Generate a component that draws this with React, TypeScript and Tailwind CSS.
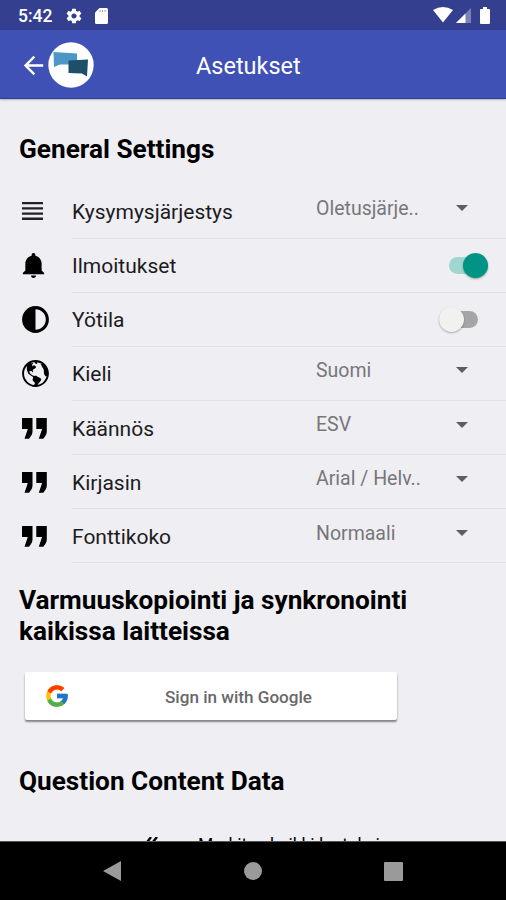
import { IoMdNotifications, IoMdContrast, IoMdGlobe, IoMdSettings } from "react-icons/io";
import { MdArrowBack } from "react-icons/md";
import { FcGoogle } from "react-icons/fc";
import type { ReactNode } from "react";

function StatusBar() {
  return (
    <div className="flex h-[30px] items-center bg-[#34408f] pl-[18px] pr-[16px] text-white">
      <span className="mt-[3px] w-[47px] text-[17.500px] font-medium leading-none">5:42</span>
      <IoMdSettings className="mt-[1px] size-[18px]" />
      <svg viewBox="0 0 13 16" className="ml-[12px] mt-[1px] h-[16px] w-[13px]" fill="currentColor">
        <path d="M4.5 0H11.500Q13 0 13 1.500V14.500Q13 16 11.500 16H1.500Q0 16 0 14.500V4.500Z" />
        <path d="M5 2V4M7.500 2V4M10 2V4" stroke="#34408f" strokeWidth=".8" opacity=".6" />
      </svg>
      <svg viewBox="0 0 20 16" className="ml-auto mr-[1px] h-[16px] w-[20px]" fill="currentColor">
        <path d="M0 3Q10-3 20 3L10 15.500Z" />
      </svg>
      <svg viewBox="0 0 15 15" className="ml-[2px] mt-[1px] h-[15px] w-[15px]" fill="currentColor">
        <path d="M0 15L15 0V15Z" opacity=".35" />
        <path d="M0 15L9.500 5.500V15Z" />
      </svg>
      <svg viewBox="0 0 10 17" className="ml-[9px] h-[17px] w-[10px]" fill="currentColor">
        <path d="M3 0H7V2H9Q10 2 10 3V16Q10 17 9 17H1Q0 17 0 16V3Q0 2 1 2H3Z" />
      </svg>
    </div>
  );
}

function Header() {
  return (
    <header className="relative z-10 flex h-[69px] items-center border-b border-[#2f3b9c] bg-[#3f51b5] text-white shadow-[0_1px_2px_rgba(0,0,0,0.25)]">
      <MdArrowBack className="ml-[19px] mt-[2px] size-[29px]" />
      <svg viewBox="0 0 46 46" className="mt-[1px] h-[46px] w-[46px]">
        <circle cx="23" cy="23" r="22.700" fill="#fff" />
        <path d="M5.500 10L29 11.500V22.500L12 22.500L6 25Z" fill="#4e96c6" />
        <path d="M20.500 18.500L40 17.500L39 34.500L34 31.500L20.500 31Z" fill="#1d4f68" />
      </svg>
      <h1 className="ml-[102px] mt-[5px] text-[23.500px] leading-none">Asetukset</h1>
    </header>
  );
}

function LinesIcon() {
  return (
    <svg viewBox="0 0 21 18" className="ml-[3px] h-[18px] w-[21px]" fill="#222">
      <path d="M0 0H21V2.300H0ZM0 5.200H21V7.500H0ZM0 10.400H21V12.700H0ZM0 15.600H21V17.900H0Z" />
    </svg>
  );
}

function QuoteIcon() {
  return (
    <svg viewBox="0 0 25 21" className="ml-[3px] h-[21px] w-[25px]" fill="#000">
      <path d="M0 0H10.500V13.500Q10.500 16 9 18L7 20.800H2.500L5.800 11H0Z" />
      <path d="M14.300 0H24.800V13.500Q24.800 16 23.300 18L21.300 20.800H16.800L20.100 11H14.300Z" />
    </svg>
  );
}

function DoubleCheckIcon() {
  return (
    <svg viewBox="0 0 28 18" className="h-[18px] w-[28px]" fill="none" stroke="#000" strokeWidth="2.400">
      <path d="M0 9L7 16L19 0M10 13L12 16L25 0" />
    </svg>
  );
}

function Select({ value }: { value: string }) {
  return (
    <div className="mb-[5px] flex w-[190px] items-center text-[#77777a]">
      <span className="w-[139.500px] text-[19.500px] leading-none">{value}</span>
      <svg viewBox="0 0 12 6" className="mb-[1px] h-[6px] w-[12px]" fill="#5d5d62">
        <path d="M0 0H12L6 6Z" />
      </svg>
    </div>
  );
}

function Toggle({ on }: { on?: boolean }) {
  return on ? (
    <div className="mr-[18px] mt-[1px] flex h-[17px] w-[39px] items-center justify-end rounded-full bg-[#9fd6d0]">
      <div className="size-[25px] shrink-0 rounded-full bg-[#009485] shadow-[0_1px_2px_rgba(0,0,0,0.35)]" />
    </div>
  ) : (
    <div className="mr-[28px] flex h-[17px] w-[39px] items-center rounded-full bg-[#a5a5a5]">
      <div className="size-[25px] shrink-0 rounded-full bg-[#f1f1ef] shadow-[0_1px_2px_rgba(0,0,0,0.3)]" />
    </div>
  );
}

function Row({ icon, label, children }: { icon: ReactNode; label: string; children: ReactNode }) {
  return (
    <div className="flex h-[54.150px] text-black">
      <div className="flex w-[72px] items-center pl-[19px]">{icon}</div>
      <div className="flex flex-1 items-center justify-between border-b-[1.500px] border-[#e1e0e5]">
        <span className="mt-[3px] text-[21px] leading-none text-[#1c1c1e]">{label}</span>
        {children}
      </div>
    </div>
  );
}

export default function App() {
  return (
    <div className="flex h-[900px] w-[506px] flex-col overflow-hidden bg-[#efeef3] font-['Roboto',sans-serif]">
      <StatusBar />
      <Header />
      <main className="h-[743px] overflow-hidden border-b border-[#555]">
        <h2 className="ml-[19px] mt-[35px] h-[50.400px] text-[26.200px] font-bold leading-[31px]">General Settings</h2>
        <Row icon={<LinesIcon />} label="Kysymysjärjestys"><Select value="Oletusjärje.." /></Row>
        <Row icon={<IoMdNotifications className="-ml-[1px] size-[31px]" />} label="Ilmoitukset"><Toggle on /></Row>
        <Row icon={<IoMdContrast className="size-[33px]" />} label="Yötila"><Toggle /></Row>
        <Row icon={<IoMdGlobe className="size-[33px]" />} label="Kieli"><Select value="Suomi" /></Row>
        <Row icon={<QuoteIcon />} label="Käännös"><Select value="ESV" /></Row>
        <Row icon={<QuoteIcon />} label="Kirjasin"><Select value="Arial / Helv.." /></Row>
        <Row icon={<QuoteIcon />} label="Fonttikoko"><Select value="Normaali" /></Row>
        <h2 className="ml-[19px] mt-[21.600px] w-[420px] text-[26.200px] font-bold leading-[31px]">
          Varmuuskopiointi ja synkronointi kaikissa laitteissa
        </h2>
        <button className="ml-[25px] mt-[25px] flex h-[48px] w-[372px] items-center rounded-[2px] bg-white pl-[19px] shadow-[0_2px_2px_rgba(0,0,0,0.45)]">
          <FcGoogle className="mt-[1px] size-[26px]" />
          <span className="ml-[95px] mt-[4px] text-[17.100px] font-medium leading-none text-[#68686a]">Sign in with Google</span>
        </button>
        <h2 className="ml-[19px] mt-[46px] text-[26.200px] font-bold leading-[31px]">Question Content Data</h2>
        <div className="mt-[40px] flex items-start pl-[132px]">
          <DoubleCheckIcon />
          <span className="ml-[38px] whitespace-nowrap text-[17.500px] leading-none">Merkitse kaikki luetuksi</span>
        </div>
      </main>
      <nav className="flex h-[58px] items-center bg-black pl-[103px] text-[#9a9a9a]">
        <svg viewBox="0 0 18 20" className="h-[20px] w-[18px]" fill="currentColor">
          <path d="M0 10L18 0V20Z" />
        </svg>
        <div className="ml-[123px] size-[18px] rounded-full bg-[#9a9a9a]" />
        <div className="ml-[122px] size-[19px] rounded-[1px] bg-[#9a9a9a]" />
      </nav>
    </div>
  );
}
